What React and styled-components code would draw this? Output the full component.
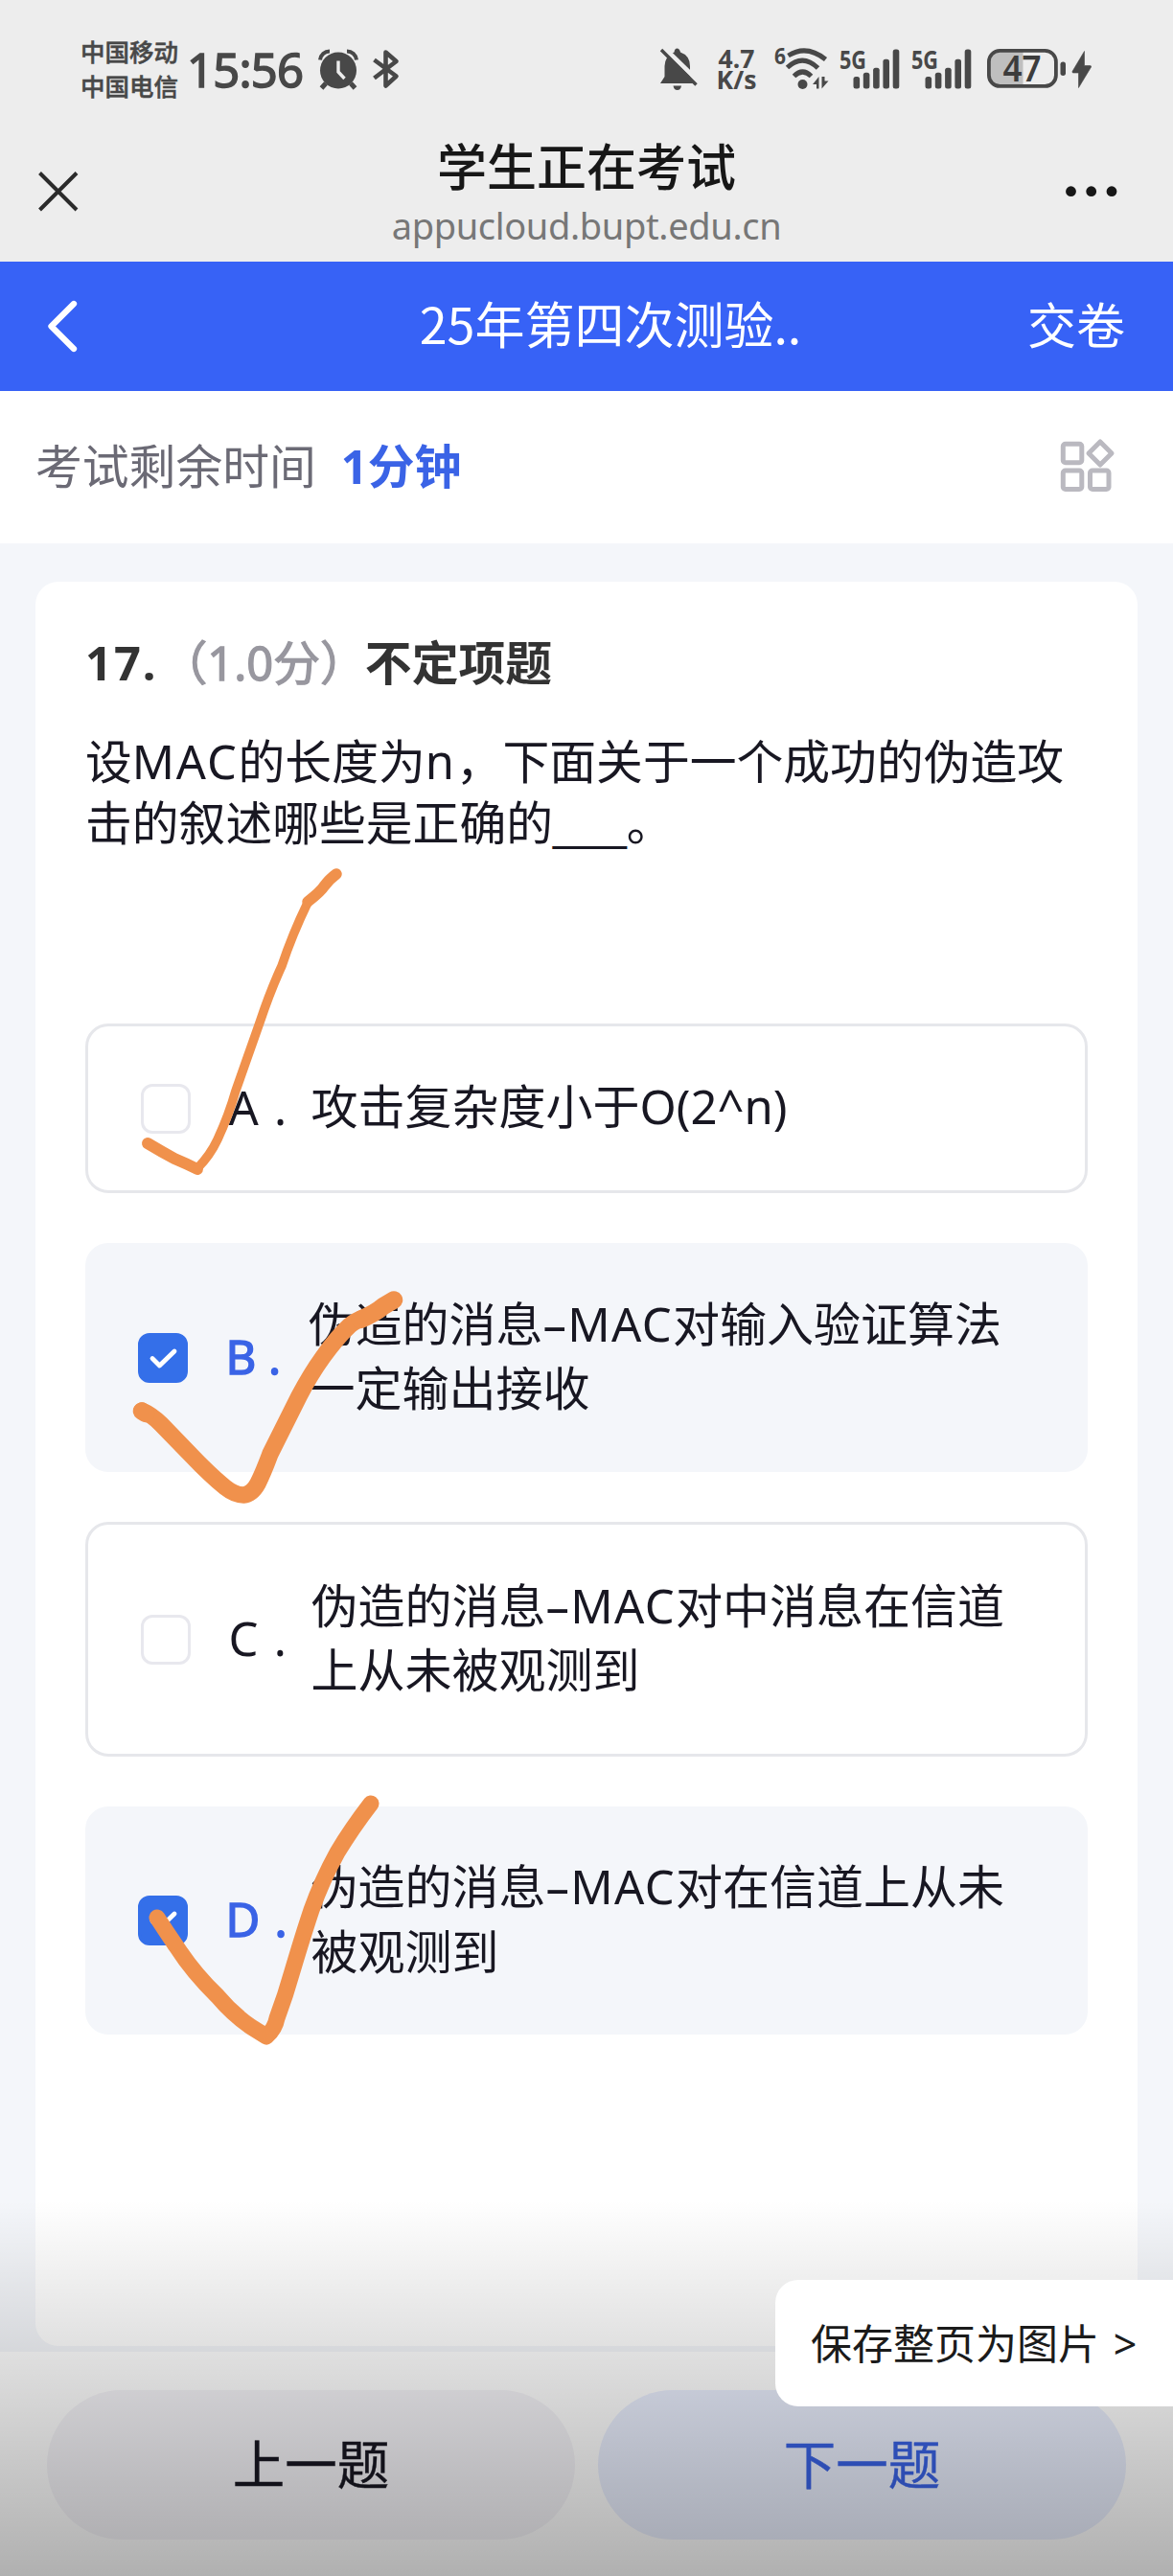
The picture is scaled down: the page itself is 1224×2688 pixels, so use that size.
import React from 'react';
import styled, { createGlobalStyle, css } from 'styled-components';

const GlobalStyle = createGlobalStyle`
  * { box-sizing: border-box; }
  body {
    margin: 0;
    background: #f4f6fa;
    font-family: "Noto Sans", "Noto Sans CJK SC", sans-serif;
  }
`;

const Page = styled.div`
  position: relative;
  width: 1224px;
  height: 2688px;
  overflow: hidden;
  display: flex;
  flex-direction: column;
  background: #f4f6fa;
`;

const StatusBar = styled.header`
  height: 144px;
  flex: none;
  display: flex;
  align-items: flex-start;
  justify-content: space-between;
  padding: 36px 83px 0 84px;
  background: #ededed;
  color: #484848;
`;

const StatusGroup = styled.div`
  height: 72px;
  display: flex;
  align-items: center;
`;

const Carriers = styled.div`
  width: 103px;
  padding-bottom: 2px;
  font: 500 25.5px/36px "Noto Sans CJK SC", sans-serif;
  -webkit-text-stroke: 0.5px currentColor;
  white-space: nowrap;
`;

const Clock = styled.span`
  width: 132px;
  margin-left: 8px;
  padding-bottom: 1px;
  font: 400 49px/72px "Noto Sans", sans-serif;
  letter-spacing: -0.8px;
  -webkit-text-stroke: 1.5px currentColor;
`;

const Glyph = styled.svg`
  display: block;
  flex: none;
  overflow: visible;
  margin-left: ${(p) => p.$gap || 0}px;
`;

const Speed = styled.div`
  width: 43px;
  margin-left: 18px;
  text-align: center;
  font: 700 26.5px/22px "Noto Sans", sans-serif;
`;

const NavBar = styled.div`
  height: 129px;
  flex: none;
  display: grid;
  grid-template-columns: 200px 1fr 200px;
  background: #ededed;
`;

const NavSide = styled.div`
  display: flex;
  justify-content: ${(p) => (p.$end ? 'flex-end' : 'flex-start')};
  padding: 33px ${(p) => (p.$end ? 57 : 38)}px 0;
`;

const NavTitle = styled.div`
  display: flex;
  flex-direction: column;
  align-items: center;
`;

const SiteTitle = styled.h1`
  margin: 0;
  font: 500 52px/60px "Noto Sans", "Noto Sans CJK SC", sans-serif;
  color: #171717;
`;

const SiteHost = styled.div`
  font-size: 38px;
  line-height: 62px;
  letter-spacing: -0.35px;
  color: #777;
`;

const ExamBar = styled.div`
  height: 135px;
  flex: none;
  display: flex;
  align-items: center;
  justify-content: space-between;
  padding: 0 50px 0 49px;
  background: #3762f6;
  color: #fff;
  font: 400 52px/70px "Noto Sans CJK SC", sans-serif;
`;

const ExamTitle = styled.span`
  margin-left: 121px;
  padding-bottom: 7px;
`;

const Submit = styled.span`
  width: 102px;
  padding-bottom: 7px;
  font-size: 51px;
`;

const TimerBar = styled.section`
  height: 159px;
  flex: none;
  display: flex;
  align-items: center;
  justify-content: space-between;
  padding: 0 60px 4px 37px;
  background: #fff;
  font-size: 48.8px;
  line-height: 70px;
  color: #6b6a75;
`;

const Remaining = styled.strong`
  margin-left: 26px;
  font-weight: 700;
  color: #3a63e6;
`;

const Main = styled.main`
  flex: none;
  height: 1887px;
  padding: 40px 37px 6px;
`;

const Card = styled.article`
  height: 1841px;
  padding: 49px 52px 0;
  border-radius: 24px;
  background: #fff;
`;

const Heading = styled.div`
  font-size: 48.8px;
  line-height: 70px;
  font-weight: 700;
  color: #333;
  white-space: nowrap;
`;

const Index = styled.span`
  letter-spacing: 2px;
`;

const Points = styled.span`
  margin: 0 -2px 0 3px;
  font-weight: 400;
  -webkit-text-stroke: 1.3px currentColor;
  color: #98979f;
`;

const Question = styled.div`
  height: 306px;
  margin: 36px 0 0;
  font-size: 48.8px;
  line-height: 64px;
  color: #181722;
  white-space: nowrap;
`;

const Latin = styled.span`
  letter-spacing: ${(p) => p.$track}px;
`;

const Blank = styled.span`
  font: 46px/1 "Liberation Sans", sans-serif;
`;

const Options = styled.div`
  display: flex;
  flex-direction: column;
  gap: 52px;
`;

const Option = styled.div`
  height: ${(p) => p.$height}px;
  display: flex;
  align-items: center;
  padding-left: 55px;
  border: 3px solid #e6e7eb;
  border-radius: 24px;
  background: #fff;
  ${(p) =>
    p.$checked &&
    css`
      padding-left: 52px;
      border-color: #f4f6fa;
      background: #f4f6fa;
    `}
`;

const Check = styled.span`
  width: 52px;
  height: 52px;
  flex: none;
  display: flex;
  align-items: center;
  justify-content: center;
  border-radius: 12px;
  border: 3px solid ${(p) => (p.$checked ? '#346fe9' : '#e8e8ee')};
  background: ${(p) => (p.$checked ? '#346fe9' : '#fff')};
`;

const Letter = styled.span`
  width: ${(p) => p.$width}px;
  margin-left: 39.5px;
  padding-bottom: 4px;
  font-size: 49px;
  line-height: 68px;
  word-spacing: ${(p) => p.$space}px;
  font-weight: 400;
  color: ${(p) => (p.$checked ? '#3a63e6' : '#181722')};
  -webkit-text-stroke: ${(p) => (p.$checked ? 1.5 : 0)}px currentColor;
`;

const Answer = styled.div`
  padding-bottom: 3px;
  font-size: 49px;
  line-height: 67.5px;
  color: #181722;
  white-space: nowrap;
`;

const Footer = styled.footer`
  flex: none;
  height: 234px;
  display: flex;
  gap: 24px;
  padding: 40px 49px 0;
  background: #fff;
`;

const Step = styled.button`
  flex: 1;
  height: 156px;
  border: 0;
  border-radius: 78px;
  padding: 0 0 2px;
  font: 400 54.5px/70px "Noto Sans", "Noto Sans CJK SC", sans-serif;
  -webkit-text-stroke: 0.4px currentColor;
  background: ${(p) => (p.$primary ? '#eaeffe' : '#f5f4f8')};
  color: ${(p) => (p.$primary ? '#3a63e6' : '#181722')};
`;

const Shade = styled.div`
  position: absolute;
  inset: auto 0 0 0;
  height: 392px;
  background: linear-gradient(rgba(0, 0, 0, 0), rgba(0, 0, 0, 0.31));
`;

const SavePill = styled.div`
  position: absolute;
  right: 0;
  top: 2379px;
  width: 415px;
  height: 132px;
  display: flex;
  align-items: center;
  padding: 2px 0 0 37px;
  border-radius: 24px 0 0 24px;
  background: #fff;
  color: #1b1b1b;
  font-size: 43px;
  line-height: 60px;
  word-spacing: 3.5px;
  white-space: nowrap;
`;

const Ink = styled.svg`
  position: absolute;
  inset: 0;
`;

const AlarmIcon = () => (
  <Glyph $gap={5} width="42" height="42" viewBox="0 0 42 42">
    <circle cx="21" cy="22.5" r="19" fill="#484848" />
    <path d="M2 11.5A10 10 0 0 1 12 2.5M40 11.5A10 10 0 0 0 30 2.5" stroke="#484848" strokeWidth="4" fill="none" />
    <path d="M8 36l-4.500 5M34 36l4.500 5" stroke="#484848" strokeWidth="5" />
    <path d="M21 12.500v11.500l6.500 7" stroke="#ededed" strokeWidth="3.400" fill="none" />
  </Glyph>
);

const BluetoothIcon = () => (
  <Glyph $gap={14} width="30" height="42" viewBox="0 0 30 42">
    <path
      d="M2.500 11.500L25.500 28.500L14.500 38.500V3.500L25.500 13L2.500 30.500"
      fill="none"
      stroke="#484848"
      strokeWidth="4.600"
      strokeLinejoin="round"
    />
  </Glyph>
);

const MutedBellIcon = () => (
  <Glyph width="41" height="46" viewBox="0 0 41 46">
    <path
      d="M1 38L5.500 31V20Q6 9 15.500 5.500Q16 1.500 18.500 1.500T22 5.500Q32 9 32 20V31L36 38Z"
      fill="#484848"
    />
    <path d="M14.500 40.500h8.500q-.8 4.500-4.250 4.500t-4.250-4.500z" fill="#484848" />
    <path d="M5 1L42 37" stroke="#ededed" strokeWidth="5" />
    <path d="M2 3L38.500 39.500" stroke="#484848" strokeWidth="3.400" />
  </Glyph>
);

const WifiIcon = () => (
  <Glyph $gap={18} width="60" height="46" viewBox="0 0 60 46">
    <text x="0" y="18" fill="#484848" fontFamily="Noto Sans" fontWeight="700" fontSize="24" textLength="12" lengthAdjust="spacingAndGlyphs">6</text>
    <g fill="none" stroke="#484848" strokeWidth="5">
      <path d="M14.500 9Q33.500 -3 53.500 13" />
      <path d="M13.500 21.500Q29.500 6.500 45.500 22" />
      <path d="M20.500 30.500Q29.500 21.500 38.500 30.500" />
    </g>
    <circle cx="29.500" cy="39" r="5" fill="#484848" />
    <path d="M46.500 43.500V31L40 39h4v4.500zM49.500 31v12.500L56.500 35.500h-4V31z" fill="#484848" />
  </Glyph>
);

const barTops = [31, 26.7, 21.7, 12.7, 2.5];

const SignalIcon = ({ gap }) => (
  <Glyph $gap={gap} width="63" height="46" viewBox="0 0 63 46">
    <text x="0" y="22.500" fill="#484848" fontFamily="Noto Sans" fontWeight="700" fontSize="27" textLength="28" lengthAdjust="spacingAndGlyphs">5G</text>
    {barTops.map((top, i) => (
      <rect key={top} x={14.5 + i * 10.3} y={top} width="6.600" height={43.5 - top} rx="2.500" fill="#484848" />
    ))}
  </Glyph>
);

const BatteryIcon = () => (
  <Glyph $gap={15} width="112" height="46" viewBox="0 0 112 46">
    <path d="M15 4H38.500V41H15Q3.500 41 3.500 30V15Q3.500 4 15 4Z" fill="#bfbfbf" />
    <rect x="2.900" y="3.900" width="70" height="37" rx="11.500" fill="none" stroke="#484848" strokeWidth="3.800" />
    <rect x="77.500" y="15.500" width="5.500" height="14.500" rx="2.700" fill="#484848" />
    <path d="M102.500 4.500L90 25.500Q89.500 27 91 27h5.500V42.500L109.500 21Q110 19.500 108.500 19.500h-6z" fill="#484848" stroke="#484848" strokeWidth="0.600" />
    <text x="17.500" y="36" fill="#3c3c3c" fontFamily="Noto Sans" fontWeight="600" fontSize="37" textLength="40" lengthAdjust="spacingAndGlyphs">47</text>
  </Glyph>
);

const GridIcon = () => (
  <Glyph width="58" height="58" viewBox="0 0 58 58" fill="none" stroke="#bab9c0" strokeWidth="5">
    <rect x="3.300" y="6.300" width="19.500" height="19.500" rx="2.500" />
    <rect x="3.300" y="34" width="19.500" height="19.500" rx="2.500" />
    <rect x="31.500" y="34" width="19.500" height="19.500" rx="2.500" />
    <path d="M42 4L54 16L42 28L30 16Z" strokeLinejoin="round" />
  </Glyph>
);

const messageMac = (
  <>
    伪造的消息<Latin $track={1.3}>–MAC</Latin>
  </>
);

const options = [
  { letter: 'A', space: 3.5, width: 86, height: 177, lines: ['攻击复杂度小于O(2^n)'] },
  { letter: 'B', space: 0, width: 86, height: 239, lines: [<>{messageMac}对输入验证算法</>, '一定输出接收'], checked: true },
  { letter: 'C', space: 3.5, width: 86, height: 245, lines: [<>{messageMac}对中消息在信道</>, '上从未被观测到'] },
  { letter: 'D', space: 2.5, width: 89, height: 238, lines: [<>{messageMac}对在信道上从未</>, '被观测到'], checked: true },
];

export default function App() {
  return (
    <Page>
      <GlobalStyle />
      <StatusBar>
        <StatusGroup>
          <Carriers>
            <div>中国移动</div>
            <div>中国电信</div>
          </Carriers>
          <Clock>15:56</Clock>
          <AlarmIcon />
          <BluetoothIcon />
        </StatusGroup>
        <StatusGroup>
          <MutedBellIcon />
          <Speed>
            <div>4.7</div>
            <div>K/s</div>
          </Speed>
          <WifiIcon />
          <SignalIcon gap={8} />
          <SignalIcon gap={12} />
          <BatteryIcon />
        </StatusGroup>
      </StatusBar>

      <NavBar>
        <NavSide>
          <Glyph width="46" height="46" viewBox="0 0 46 46">
            <path d="M3.500 3.500L42 42M42 3.500L3.500 42" stroke="#2b2b2b" strokeWidth="4" />
          </Glyph>
        </NavSide>
        <NavTitle>
          <SiteTitle>学生正在考试</SiteTitle>
          <SiteHost>appucloud.bupt.edu.cn</SiteHost>
        </NavTitle>
        <NavSide $end>
          <Glyph width="56" height="46" viewBox="0 0 56 46" fill="#171717">
            <circle cx="6.500" cy="22.700" r="5.400" />
            <circle cx="27.700" cy="22.700" r="5.400" />
            <circle cx="49" cy="22.700" r="5.400" />
          </Glyph>
        </NavSide>
      </NavBar>

      <ExamBar>
        <Glyph width="32" height="56" viewBox="0 0 32 56">
          <path d="M28 4L4.500 27.500L28 51" fill="none" stroke="#fff" strokeWidth="6.300" strokeLinecap="round" strokeLinejoin="round" />
        </Glyph>
        <ExamTitle>25年第四次测验..</ExamTitle>
        <Submit>交卷</Submit>
      </ExamBar>

      <TimerBar>
        <div>
          考试剩余时间
          <Remaining>1分钟</Remaining>
        </div>
        <GridIcon />
      </TimerBar>

      <Main>
        <Card>
          <Heading>
            <Index>17.</Index>
            <Points>（1.0分）</Points>不定项题
          </Heading>
          <Question>
            <div>
              设<Latin $track={1.8}>MAC</Latin>的长度为<Latin $track={1.8}>n</Latin>，下面关于一个成功的伪造攻
            </div>
            <div>
              击的叙述哪些是正确的<Blank>___</Blank>。
            </div>
          </Question>
          <Options>
            {options.map((o) => (
              <Option key={o.letter} $height={o.height} $checked={o.checked}>
                <Check $checked={o.checked}>
                  {o.checked && (
                    <Glyph width="34" height="34" viewBox="0 0 34 34">
                      <path d="M6 17.500L13.500 25L29 10" fill="none" stroke="#fff" strokeWidth="4.800" strokeLinecap="round" strokeLinejoin="round" />
                    </Glyph>
                  )}
                </Check>
                <Letter $checked={o.checked} $width={o.width} $space={o.space}>{o.letter} .</Letter>
                <Answer>
                  {o.lines.map((line, i) => (
                    <div key={i}>{line}</div>
                  ))}
                </Answer>
              </Option>
            ))}
          </Options>
        </Card>
      </Main>

      <Footer>
        <Step>上一题</Step>
        <Step $primary>下一题</Step>
      </Footer>

      <Ink width="1224" height="2688" viewBox="0 0 1224 2688" fill="none" stroke="#f0914c" strokeLinecap="round" strokeLinejoin="round">
        <path strokeWidth="12" d="M154 1193Q169 1202 182 1209Q194 1214 206 1220" />
        <path strokeWidth="9.500" d="M206 1219Q219 1206 227 1189Q239 1163 246 1138L271 1067Q282 1034 294 1008Q305 975 321 942" />
        <path strokeWidth="11.500" d="M321 941Q335 930 338 925Q344 917 351 912" />
        <path strokeWidth="17.500" d="M148 1472Q158 1476 168 1486L200 1519Q220 1540 235 1552Q245 1560 254 1560Q263 1559 269 1548Q275 1536 282 1517Q297 1487 312 1457Q324 1434 337 1416Q352 1395 365 1383Q371 1378 382 1374" />
        <path strokeWidth="18.500" d="M148 1472.500L152 1475M376 1377Q392 1370 400 1363L411 1356.500" />
        <path strokeWidth="17" d="M164 2001Q173 2015 184 2031Q202 2059 227 2083Q243 2102 262 2115L278 2125Q287 2117 289 2106Q298 2082 305 2057Q316 2020 325 1993Q336 1962 352 1933Q367 1908 387 1882" />
      </Ink>

      <Shade />
      <SavePill>保存整页为图片 &gt;</SavePill>
    </Page>
  );
}
